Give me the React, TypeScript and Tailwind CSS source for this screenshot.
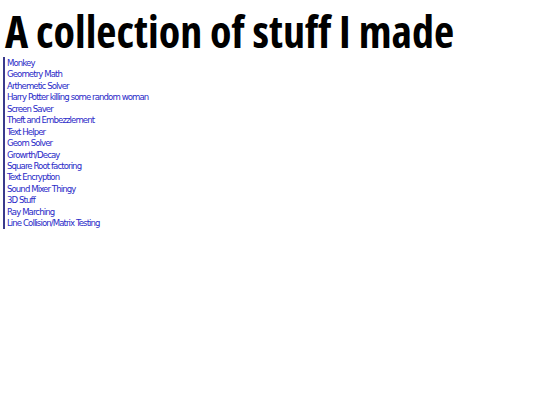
const items = [
  'Monkey',
  'Geometry Math',
  'Arthemetic Solver',
  'Harry Potter killing some random woman',
  'Screen Saver',
  'Theft and Embezzlement',
  'Text Helper',
  'Geom Solver',
  'Growrth/Decay',
  'Square Root factoring',
  'Text Encryption',
  'Sound Mixer Thingy',
  '3D Stuff',
  'Ray Marching',
  'Line Collision/Matrix Testing',
];

export default function App() {
  return (
    <div className="min-h-[405px] bg-white">
      <h1 className="pl-[5px] pt-[8px] font-['Open_Sans',sans-serif] text-[44px] font-bold leading-[47px] text-black font-stretch-condensed">
        A collection of stuff I made
      </h1>
      <ul className="ml-[3px] mt-[2px] w-fit border-l-2 border-[#3a3a8c] pl-[2px] font-['DejaVu_Sans_Condensed',sans-serif]">
        {items.map(item => (
          <li key={item} className="text-[9.5px] leading-[11.43px] tracking-[-0.9px] text-[#2a2ac8]">
            <a href="#">{item}</a>
          </li>
        ))}
      </ul>
    </div>
  );
}
